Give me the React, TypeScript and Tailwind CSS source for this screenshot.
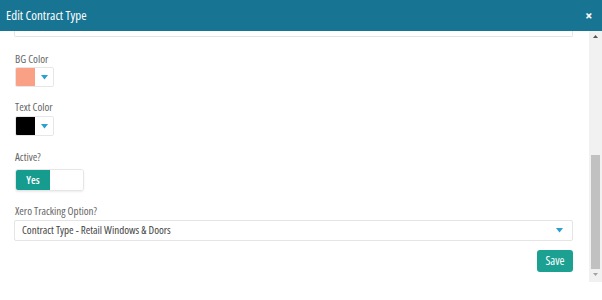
import React from "react";

function Caret() {
  return (
    <svg width="7" height="5" viewBox="0 0 7 5" className="block">
      <path d="M0 0 L7 0 L3.5 4.5 Z" fill="#2a9fd0" />
    </svg>
  );
}

function ColorPicker({ color }: { color: string }) {
  return (
    <div className="flex h-[20px] w-[39px] border border-[#e6e6e6] rounded-[2px] overflow-hidden">
      <div className="w-[19px] h-full" style={{ background: color }} />
      <div className="flex-1 flex items-center justify-center bg-white">
        <Caret />
      </div>
    </div>
  );
}

export default function App() {
  return (
    <div
      className="w-[602px] h-[300px] bg-white flex flex-col overflow-hidden font-stretch-[75%]"
      style={{ fontFamily: '"Open Sans", sans-serif' }}
    >
      <div className="h-[31px] bg-[#177493] flex items-center justify-between pl-[6px] pr-[10px] shrink-0">
        <span className="text-white text-[13px]">Edit Contract Type</span>
        <span className="text-white text-[14px] font-bold leading-none">×</span>
      </div>
      <div className="flex flex-1 min-h-0">
        <div className="flex-1 pl-[14px] pr-[16px] flex flex-col">
          <div className="h-[6px] border-x border-b border-[#e5e5e5] rounded-b-[2px]" />
          <div className="mt-[15px] text-[11px] leading-[14px] text-[#666] pl-[1px]">BG Color</div>
          <div className="mt-[1px] pl-[1px]">
            <ColorPicker color="#f9a085" />
          </div>
          <div className="mt-[13px] text-[11px] leading-[14px] text-[#666] pl-[1px]">Text Color</div>
          <div className="mt-[2px] pl-[1px]">
            <ColorPicker color="#000000" />
          </div>
          <div className="mt-[14px] text-[11px] leading-[14px] text-[#666] pl-[1px]">Active?</div>
          <div className="mt-[5px] pl-[1px]">
            <div className="flex h-[22px] w-[69px] border border-[#e6e6e6] rounded-[3px] overflow-hidden shadow-[0_1px_2px_rgba(0,0,0,0.08)]">
              <div className="w-[34px] bg-[#169b8f] text-white text-[11px] font-semibold flex items-center justify-center">
                Yes
              </div>
              <div className="flex-1 bg-white" />
            </div>
          </div>
          <div className="mt-[13px] text-[11px] leading-[14px] text-[#666] pl-[1px]">Xero Tracking Option?</div>
          <div className="mt-[2px] h-[21px] border border-[#e5e5e5] rounded-[2px] flex items-center justify-between pl-[7px] pr-[9px]">
            <span className="text-[11px] text-[#444]">Contract Type - Retail Windows &amp; Doors</span>
            <Caret />
          </div>
          <div className="mt-[9px] flex justify-end">
            <div className="h-[22px] w-[36px] bg-[#1ba092] rounded-[3px] text-white text-[12px] flex items-center justify-center">
              Save
            </div>
          </div>
        </div>
        <div className="w-[13px] bg-[#f1f1f1] flex flex-col items-center relative h-[251px]">
          <div className="h-[11px] flex items-center justify-center">
            <svg width="5" height="3" viewBox="0 0 5 3"><path d="M0 3 L5 3 L2.5 0 Z" fill="#555" /></svg>
          </div>
          <div className="mt-[113px] w-[9px] h-[114px] bg-[#c1c1c1]" />
          <div className="h-[11px] flex items-center justify-center">
            <svg width="5" height="3" viewBox="0 0 5 3"><path d="M0 0 L5 0 L2.5 3 Z" fill="#a3a3a3" /></svg>
          </div>
        </div>
      </div>
    </div>
  );
}
